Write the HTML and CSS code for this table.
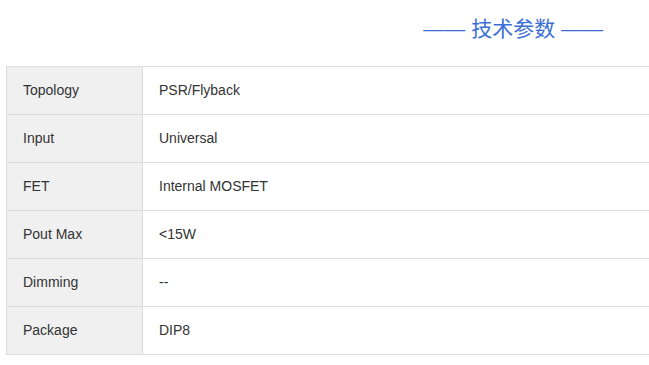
FILE: index.html
```html
<!DOCTYPE html>
<html lang="zh-CN">
<head>
  <meta charset="UTF-8">
  <meta name="viewport" content="width=device-width, initial-scale=1.0">
  <title>技术参数</title>
  <link rel="stylesheet" href="styles.css">
</head>
<body>
  <div class="params">
    <!-- 标题 -->
    <h2 class="params-title">—— 技术参数 ——</h2>

    <!-- 参数表 -->
    <table class="params-table">
      <tr><th>Topology</th><td>PSR/Flyback</td></tr>
      <tr><th>Input</th><td>Universal</td></tr>
      <tr><th>FET</th><td>Internal MOSFET</td></tr>
      <tr><th>Pout Max</th><td>&lt;15W</td></tr>
      <tr><th>Dimming</th><td>--</td></tr>
      <tr><th>Package</th><td>DIP8</td></tr>
    </table>
  </div>
</body>
</html>
```

FILE: styles.css
```css
body {
  font-family: "Liberation Sans", Arial, "Noto Sans CJK SC", sans-serif;
  margin: 0;
  padding: 0;
  background-color: #fff;
  color: #333;
}

.params {
  margin-left: 6px;
}

.params-title {
  margin: 0;
  height: 66px;
  padding-right: 46px;
  line-height: 57px;
  text-align: right;
  font-size: 21px;
  font-weight: normal;
  color: #3b6fd6;
}

.params-table {
  width: 100%;
  border-collapse: collapse;
  font-size: 14px;
}

.params-table th,
.params-table td {
  height: 46px;
  padding: 0 16px 1px;
  border: 1px solid #dddddd;
  text-align: left;
  font-weight: normal;
}

.params-table td {
  border-right: none;
}

.params-table th {
  width: 103px;
  background-color: #f0f0f0;
}
```
